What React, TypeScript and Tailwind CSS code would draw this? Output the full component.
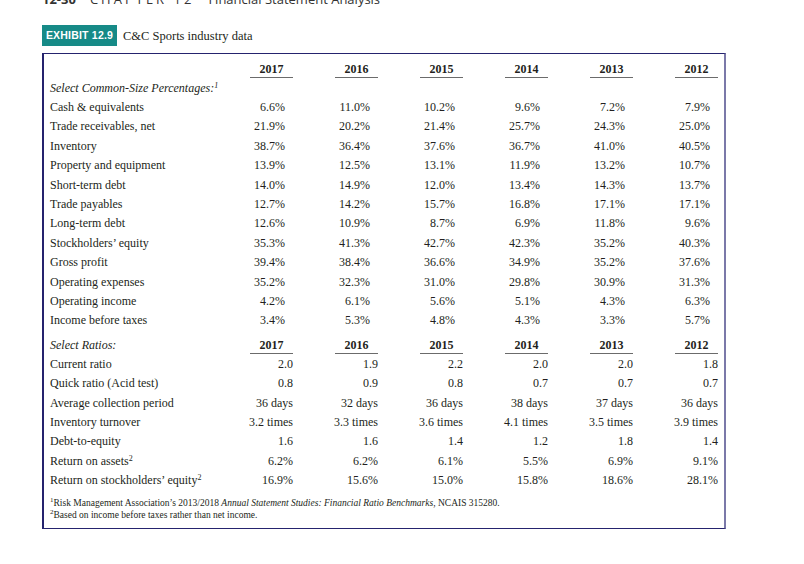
import React from "react";

const serif = { fontFamily: '"Liberation Serif", "Times New Roman", serif' };

const years = ["2017", "2016", "2015", "2014", "2013", "2012"];

const pctRows: [React.ReactNode, string[]][] = [
  ["Cash & equivalents", ["6.6%", "11.0%", "10.2%", "9.6%", "7.2%", "7.9%"]],
  ["Trade receivables, net", ["21.9%", "20.2%", "21.4%", "25.7%", "24.3%", "25.0%"]],
  ["Inventory", ["38.7%", "36.4%", "37.6%", "36.7%", "41.0%", "40.5%"]],
  ["Property and equipment", ["13.9%", "12.5%", "13.1%", "11.9%", "13.2%", "10.7%"]],
  ["Short-term debt", ["14.0%", "14.9%", "12.0%", "13.4%", "14.3%", "13.7%"]],
  ["Trade payables", ["12.7%", "14.2%", "15.7%", "16.8%", "17.1%", "17.1%"]],
  ["Long-term debt", ["12.6%", "10.9%", "8.7%", "6.9%", "11.8%", "9.6%"]],
  ["Stockholders’ equity", ["35.3%", "41.3%", "42.7%", "42.3%", "35.2%", "40.3%"]],
  ["Gross profit", ["39.4%", "38.4%", "36.6%", "34.9%", "35.2%", "37.6%"]],
  ["Operating expenses", ["35.2%", "32.3%", "31.0%", "29.8%", "30.9%", "31.3%"]],
  ["Operating income", ["4.2%", "6.1%", "5.6%", "5.1%", "4.3%", "6.3%"]],
  ["Income before taxes", ["3.4%", "5.3%", "4.8%", "4.3%", "3.3%", "5.7%"]],
];

const Sup = ({ children, size = "text-[8px]" }: { children: React.ReactNode; size?: string }) => (
  <sup className={size}>{children}</sup>
);

const ratioRows: [React.ReactNode, string[]][] = [
  ["Current ratio", ["2.0", "1.9", "2.2", "2.0", "2.0", "1.8"]],
  ["Quick ratio (Acid test)", ["0.8", "0.9", "0.8", "0.7", "0.7", "0.7"]],
  ["Average collection period", ["36 days", "32 days", "36 days", "38 days", "37 days", "36 days"]],
  ["Inventory turnover", ["3.2 times", "3.3 times", "3.6 times", "4.1 times", "3.5 times", "3.9 times"]],
  ["Debt-to-equity", ["1.6", "1.6", "1.4", "1.2", "1.8", "1.4"]],
  [
    <>
      Return on assets<Sup>2</Sup>
    </>,
    ["6.2%", "6.2%", "6.1%", "5.5%", "6.9%", "9.1%"],
  ],
  [
    <>
      Return on stockholders’ equity<Sup>2</Sup>
    </>,
    ["16.9%", "15.6%", "15.0%", "15.8%", "18.6%", "28.1%"],
  ],
];

function YearHeader({ label }: { label: React.ReactNode }) {
  return (
    <div className="grid grid-cols-[158px_repeat(6,85px)] items-end">
      <div className="italic leading-[17px] text-[12px]">{label}</div>
      {years.map((y) => (
        <div key={y} className="flex justify-end">
          <span className="w-[43px] text-center font-bold leading-[16px] text-[12px] border-b border-[#6b6b6b]">
            {y}
          </span>
        </div>
      ))}
    </div>
  );
}

function DataRow({ label, vals, pad }: { label: React.ReactNode; vals: string[]; pad: boolean }) {
  return (
    <div className="grid grid-cols-[158px_repeat(6,85px)] h-[19.4px] items-center text-[12px]">
      <div className="whitespace-nowrap">{label}</div>
      {vals.map((v, i) => (
        <div key={i} className={`text-right whitespace-nowrap ${pad ? "pr-[8px]" : ""}`}>
          {v}
        </div>
      ))}
    </div>
  );
}

export default function App() {
  return (
    <div className="w-[804px] h-[564px] bg-white text-[#231f20] overflow-hidden" style={serif}>
      <div
        className="-mt-[8px] ml-[42px] flex items-baseline leading-[14px] text-[13px] text-[#333]"
        style={{ fontFamily: '"Open Sans", "Liberation Sans", sans-serif' }}
      >
        <span className="font-bold">12-30</span>
        <span className="ml-[14px] tracking-[3px]">CHAPTER 12</span>
        <span className="ml-[14px]">Financial Statement Analysis</span>
      </div>

      <div className="mt-[19px] ml-[42px] flex items-center">
        <div
          className="h-[21px] w-[75px] bg-[#168a87] text-white font-bold text-[10.5px] flex items-center justify-center tracking-[0.2px]"
          style={{ fontFamily: '"Liberation Sans", Arial, sans-serif' }}
        >
          EXHIBIT 12.9
        </div>
        <div className="ml-[6px] text-[12.5px] leading-[16px]">C&amp;C Sports industry data</div>
      </div>

      <div className="mt-[7px] ml-[42px] w-[684px] border-t border-b border-l-2 border-r-2 border-t-[#25236e] border-b-[#25236e] border-l-[#25236e] border-r-[#7b79a9] pl-[6px] pr-[6px] pt-[7px] pb-[7px]">
        <YearHeader label="" />
        <div className="h-[19.4px] flex items-center italic text-[12px]">
          <span>
            Select Common-Size Percentages:<Sup>1</Sup>
          </span>
        </div>
        {pctRows.map(([l, v], i) => (
          <DataRow key={i} label={l} vals={v} pad />
        ))}
        <div className="mt-[7px]">
          <YearHeader label="Select Ratios:" />
        </div>
        {ratioRows.map(([l, v], i) => (
          <DataRow key={i} label={l} vals={v} pad={false} />
        ))}
        <div className="mt-[7px] text-[9.5px] leading-[12px]">
          <div>
            <Sup size="text-[7px]">1</Sup>Risk Management Association’s 2013/2018{" "}
            <i>Annual Statement Studies: Financial Ratio Benchmarks</i>, NCAIS 315280.
          </div>
          <div>
            <Sup size="text-[7px]">2</Sup>Based on income before taxes rather than net income.
          </div>
        </div>
      </div>
    </div>
  );
}
